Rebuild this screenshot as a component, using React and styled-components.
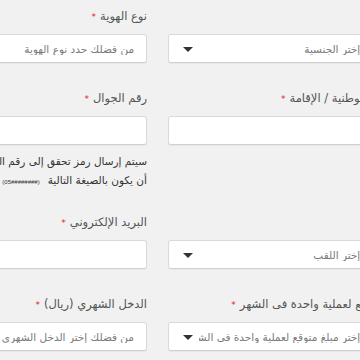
import React from "react";
import styled, { createGlobalStyle } from "styled-components";

const GlobalStyle = createGlobalStyle`
  html, body {
    margin: 0;
    padding: 0;
    background: #f1f1f1;
  }
  * {
    box-sizing: border-box;
  }
`;

const Viewport = styled.div`
  width: 360px;
  height: 360px;
  overflow: hidden;
  background: #f1f1f1;
`;

const Form = styled.form`
  direction: rtl;
  display: grid;
  grid-template-columns: 252px 252px;
  column-gap: 21px;
  row-gap: 26px;
  width: 525px;
  margin-left: -105px;
  padding-top: 7px;
  font-family: "DejaVu Sans", sans-serif;
`;

const Field = styled.div`
  display: flex;
  flex-direction: column;
`;

const Label = styled.label`
  display: block;
  height: 18px;
  font-size: 11.5px;
  line-height: 18px;
  color: #555;
  margin-bottom: 9px;
  white-space: nowrap;
`;

const Star = styled.span`
  color: #e0242b;
  font-size: 9px;
  line-height: 0;
  margin-right: 4px;
`;

const Box = styled.div`
  position: relative;
  height: 29px;
  background: #fff;
  border: 1px solid #dadada;
  border-bottom-color: #d0d0d0;
  border-radius: 3px;
  box-shadow: 0 1px 1px rgba(0, 0, 0, 0.04);
  display: flex;
  align-items: center;
  padding: 0 12px 0 ${(p) => (p.$select ? "30px" : "12px")};
  font-size: 10.5px;
  color: #7a7a7a;
`;

const Value = styled.span`
  flex: 1;
  min-width: 0;
  overflow: hidden;
  white-space: nowrap;
`;

const Caret = styled.span`
  position: absolute;
  left: 14px;
  top: 50%;
  margin-top: -2px;
  width: 0;
  height: 0;
  border-left: 5px solid transparent;
  border-right: 5px solid transparent;
  border-top: 5px solid #333;
`;

const Help = styled.div`
  margin: 7px 0 -3px;
  color: #333;
`;

const HelpLine = styled.div`
  display: flex;
  align-items: baseline;
  gap: 8px;
  height: 19px;
  font-size: 10.5px;
  line-height: 19px;
  white-space: nowrap;
`;

const Format = styled.span`
  direction: ltr;
  font-family: "Liberation Sans", sans-serif;
  font-size: 6px;
`;

function Select({ text }) {
  return (
    <Box $select>
      <Value>{text}</Value>
      <Caret />
    </Box>
  );
}

function Input({ text }) {
  return (
    <Box>
      <Value>{text}</Value>
    </Box>
  );
}

export default function App() {
  return (
    <>
      <GlobalStyle />
      <Viewport>
        <Form>
          <Field>
            <Label>
              الجنسية<Star>*</Star>
            </Label>
            <Select text="من فضلك إختر الجنسية" />
          </Field>
          <Field>
            <Label>
              نوع الهوية<Star>*</Star>
            </Label>
            <Input text="من فضلك حدد نوع الهوية" />
          </Field>

          <Field>
            <Label>
              رقم الهوية الوطنية / الإقامة<Star>*</Star>
            </Label>
            <Input />
          </Field>
          <Field>
            <Label>
              رقم الجوال<Star>*</Star>
            </Label>
            <Input />
            <Help>
              <HelpLine>سيتم إرسال رمز تحقق إلى رقم الجوال المدخل لذلك يجب</HelpLine>
              <HelpLine>
                <span>أن يكون بالصيغة التالية</span>
                <Format>(05########)</Format>
              </HelpLine>
            </Help>
          </Field>

          <Field>
            <Label>
              اللقب<Star>*</Star>
            </Label>
            <Select text="من فضلك إختر اللقب" />
          </Field>
          <Field>
            <Label>
              البريد الإلكتروني<Star>*</Star>
            </Label>
            <Input />
          </Field>

          <Field>
            <Label>
              المبلغ المتوقع لعملية واحدة فى الشهر<Star>*</Star>
            </Label>
            <Select text="من فضلك إختر مبلغ متوقع لعملية واحدة فى الشهر" />
          </Field>
          <Field>
            <Label>
              الدخل الشهري (ريال)<Star>*</Star>
            </Label>
            <Input text="من فضلك إختر الدخل الشهري" />
          </Field>
        </Form>
      </Viewport>
    </>
  );
}
